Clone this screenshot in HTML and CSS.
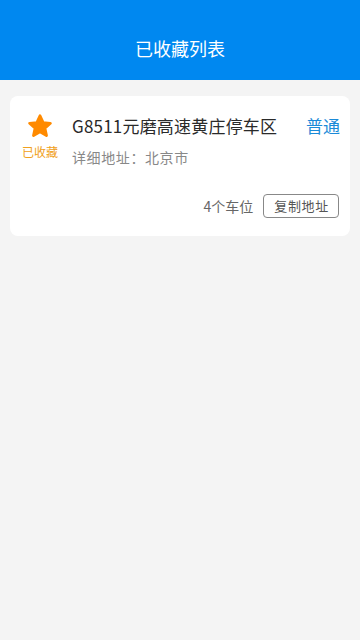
FILE: index.html
```html
<!DOCTYPE html>
<html lang="zh">
<head>
<meta charset="utf-8">
<meta name="viewport" content="width=device-width, initial-scale=1">
<link rel="stylesheet" href="styles.css">
</head>
<body>
<header class="header">
  <h1 class="header-title">已收藏列表</h1>
</header>
<main class="list">
  <div class="card">
    <div class="fav">
      <svg class="star" viewBox="0 0 24 24" width="24" height="24" aria-hidden="true">
        <polygon points="12,2.5 14.9,8.9 21.6,9.5 16.5,14 18,20.8 12,17.3 6,20.8 7.5,14 2.4,9.5 9.1,8.9" fill="#ff8a00" stroke="#ff8a00" stroke-width="2.6" stroke-linejoin="round"/>
      </svg>
      <span class="fav-label">已收藏</span>
    </div>
    <div class="info">
      <div class="info-top">
        <span class="name">G8511元磨高速黄庄停车区</span>
        <span class="tag">普通</span>
      </div>
      <div class="addr">详细地址：北京市</div>
      <div class="info-bottom">
        <span class="spots">4个车位</span>
        <button class="copy-btn" type="button">复制地址</button>
      </div>
    </div>
  </div>
</main>
</body>
</html>
```

FILE: styles.css
```css
* { box-sizing: border-box; }
html, body { margin: 0; padding: 0; }
body {
  background: #f4f4f4;
  font-family: "Noto Sans CJK SC", "Noto Sans", "Liberation Sans", sans-serif;
  width: 360px;
  min-height: 640px;
}
.header {
  height: 80px;
  background: #0088f0;
  display: flex;
  align-items: center;
  justify-content: center;
  padding-top: 16px;
}
.header-title {
  margin: 0;
  color: #ffffff;
  font-size: 18px;
  font-weight: 400;
  line-height: 24px;
}
.list {
  padding: 16px 10px 0;
}
.card {
  background: #ffffff;
  border-radius: 8px;
  height: 140px;
  display: flex;
  padding-top: 17px;
}
.fav {
  width: 60px;
  display: flex;
  flex-direction: column;
  align-items: center;
}
.star {
  display: block;
  width: 26px;
  height: 26px;
}
.fav-label {
  margin-top: 5px;
  font-size: 12px;
  line-height: 16px;
  color: #f0a020;
}
.info {
  flex: 1;
  padding-left: 2px;
  padding-right: 10px;
  display: flex;
  flex-direction: column;
}
.info-top {
  display: flex;
  justify-content: space-between;
  align-items: center;
  height: 26px;
}
.name {
  font-size: 17px;
  letter-spacing: 0.2px;
  color: #2a2a2a;
  font-weight: 400;
  line-height: 26px;
}
.tag {
  font-size: 17px;
  color: #1a8ad8;
  line-height: 26px;
}
.addr {
  margin-top: 8px;
  font-size: 14px;
  letter-spacing: 0.6px;
  color: #888888;
  line-height: 20px;
}
.info-bottom {
  margin-top: 27px;
  display: flex;
  justify-content: flex-end;
  align-items: center;
  gap: 10px;
  padding-right: 1px;
}
.spots {
  font-size: 14px;
  color: #666666;
  line-height: 20px;
}
.copy-btn {
  font-family: inherit;
  font-size: 13px;
  letter-spacing: 0.7px;
  color: #555555;
  background: #ffffff;
  border: 1px solid #888888;
  border-radius: 4px;
  height: 24px;
  padding: 0 9px 0 10px;
  line-height: 22px;
}
```
